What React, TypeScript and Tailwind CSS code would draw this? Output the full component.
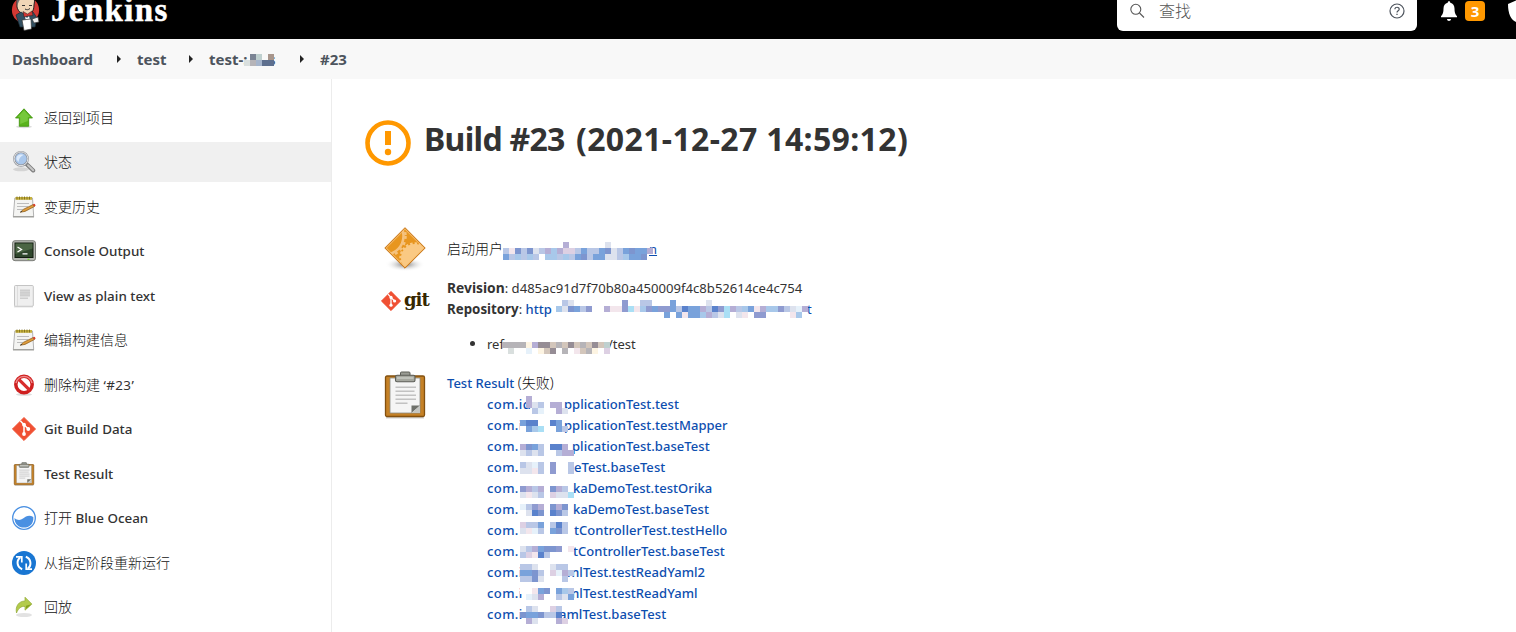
import type { ReactNode } from 'react'

const palette: Record<string, string> = {
  a: '#7d95cf',
  b: '#b9c7e6',
  c: '#dde2ee',
  d: '#5a82cc',
  e: '#a8c8ea',
  f: '#f3e6ec',
  g: '#b5aed5',
  h: '#8f9bd0',
  i: '#79a2db',
  j: '#ddd0e3',
  k: '#aadff5',
  m: '#e6f1fa',
  w: '#ffffff',
  1: '#7b8494',
  2: '#bfd0cf',
  3: '#a8968c',
  4: '#d9dfde',
  5: '#a5b4cb',
  6: '#5e6f8e',
  7: '#b6b4b8',
  8: '#968d95',
  9: '#d3c6bb',
  0: '#fdf4e2',
}

// 6px blocks that hide part of a name, one character per block
const Mosaic = ({ rows, className }: { rows: string[]; className: string }) => {
  const cols = Math.max(...rows.map((r) => r.length))
  return (
    <svg
      className={`absolute ${className}`}
      width={cols * 6}
      height={rows.length * 6}
      shapeRendering="crispEdges"
      aria-hidden="true"
    >
      {rows.map((row, y) =>
        row.split('').map((c, x) =>
          palette[c] ? (
            <rect key={`${x}-${y}`} x={x * 6} y={y * 6} width="6" height="6" fill={palette[c]} />
          ) : null
        )
      )}
    </svg>
  )
}

const JenkinsLogo = () => (
  <svg className="w-[30px] h-[42px]" viewBox="0 0 30 42">
    <circle cx="14.5" cy="21" r="13.6" fill="#d33833" />
    <path d="M6 18C5 8 9 2 15 2s10 5 8 14c0 6-3 10-7 10S7 23 6 18z" fill="#f0d6b7" stroke="#222" strokeWidth="1" />
    <path d="M6 17c-1-8 1-14 8-15-4 3-4 8-6 10z" fill="#6d6b6d" />
    <path d="M11 16.500h3M18 16.500h3M14 20c2 1 3 1 5-.5" stroke="#333" strokeWidth="1" fill="none" />
    <path d="M5 26l5-3 6 4 6-4 4 6-2 9H9z" fill="#335061" stroke="#1b2d38" strokeWidth=".7" />
    <path d="M14 27l2 2 2-2 1 4-4 2z" fill="#fff" />
    <path d="M12 22.500l4.500 2.500 4.500-3 1 4.500-5 .5-4 1z" fill="#d33833" stroke="#222" strokeWidth=".5" />
    <path d="M11 31l9-1 .5 10-7.500 1.500z" fill="#fff" stroke="#333" strokeWidth=".7" />
    <path d="M21 30l6-2 1 5-5 1z" fill="#eee" stroke="#333" strokeWidth=".7" />
  </svg>
)

const ArrowUpIcon = () => (
  <svg className="w-6 h-6" viewBox="0 0 24 24">
    <ellipse cx="12" cy="20.800" rx="8" ry="1.500" fill="#ddd" />
    <path d="M12 2.800L20.500 12H16.700v8.300H7.300V12H3.500z" fill="#59b31c" stroke="#3c9307" strokeWidth=".8" />
    <path d="M12 4.200L18.300 11.200H15.800V15L8.200 18V11.200H5.700z" fill="#8bd650" opacity=".6" />
  </svg>
)

const SearchLensIcon = () => (
  <svg className="w-6 h-6" viewBox="0 0 24 24">
    <ellipse cx="9" cy="19.300" rx="8" ry="2" fill="#d4d4d4" />
    <path d="M14.500 14L21.200 20.500" stroke="#7d7d7d" strokeWidth="4" strokeLinecap="round" />
    <path d="M16 15.200L21.200 20.200" stroke="#c6c6c6" strokeWidth="2" strokeLinecap="round" />
    <circle cx="9" cy="8.800" r="6.800" fill="#a9c7ec" stroke="#8e9299" strokeWidth="2.200" />
    <circle cx="9" cy="8.800" r="6.900" fill="none" stroke="#e3e4e6" strokeWidth="1" />
    <path d="M4.500 9.500C4 5 8 3.800 11.500 5 9 6 7 8 6.500 12z" fill="#dceafb" />
  </svg>
)

const NotepadIcon = () => (
  <svg className="w-6 h-6" viewBox="0 0 24 24">
    <path d="M2.800 3h17.700l1.200 18.500H1.300z" fill="#f4f4f2" stroke="#aaa" strokeWidth=".9" />
    <path d="M1 21.800h21" stroke="#a0a09c" strokeWidth="1.400" />
    <path d="M3.500 2h16.500v2.800H3.500z" fill="#c7b23e" />
    <path d="M5 1.500v3M7.500 1.500v3M10 1.500v3M12.500 1.500v3M15 1.500v3M17.500 1.500v3" stroke="#74651b" strokeWidth=".8" />
    <path d="M5 8.500h12M5 11.500h11M5 14.500h6" stroke="#bcbcbc" strokeWidth="1" />
    <path d="M8.500 17.200l3-2.900 9.700-4.800 1.300 2-9.500 4.900z" fill="#df9d3d" stroke="#855819" strokeWidth=".7" />
    <path d="M20.800 9.500l1.800-.7 1.100 1.600-1.600 1z" fill="#d83a2b" />
    <path d="M8 17.500l2.200-.8-1-1z" fill="#333" />
  </svg>
)

const TerminalIcon = () => (
  <svg className="w-6 h-6" viewBox="0 0 24 24">
    <rect x=".5" y="1.700" width="23" height="20" rx="2.500" fill="#b5b7b1" stroke="#73756f" strokeWidth=".9" />
    <rect x="3" y="4" width="18" height="14.500" fill="#2f472c" stroke="#121c10" strokeWidth="1" />
    <path d="M3.500 4.500h17v5L3.500 15z" fill="#5b7752" opacity=".65" />
    <path d="M5.500 8l4 2.500-4 2.500M10.500 14.800h5" stroke="#fff" strokeWidth="1.300" fill="none" />
    <path d="M15.500 20.300h2" stroke="#6ed629" strokeWidth="1.200" />
  </svg>
)

const DocumentIcon = () => (
  <svg className="w-6 h-6" viewBox="0 0 24 24">
    <rect x="2.500" y="1.500" width="18.800" height="20.800" rx="1" fill="#efefef" stroke="#bdbdbd" strokeWidth=".9" />
    <path d="M5.500 2v20" stroke="#d8d8d8" strokeWidth=".8" />
    <path d="M8 5.500h10v7H8zM8 13.500h8v1.500H8z" fill="#cecece" />
    <path d="M8 7.500h10M8 10h10" stroke="#dedede" strokeWidth=".6" />
    <path d="M2 22.800h19" stroke="#cfcfcf" />
  </svg>
)

const ForbidIcon = () => (
  <svg className="w-6 h-6" viewBox="0 0 24 24">
    <ellipse cx="12" cy="21.500" rx="8" ry="1.300" fill="#ddd" />
    <circle cx="12" cy="11.500" r="8.200" fill="none" stroke="#cf2020" strokeWidth="3.500" />
    <path d="M6.300 5.800l11.400 11.400" stroke="#d82d2d" strokeWidth="3.200" />
    <path d="M4 10a8.200 8.200 0 0 1 16 0" fill="none" stroke="#ed8989" strokeWidth="1.500" />
  </svg>
)

const GitIcon = ({ className = 'w-6 h-6' }: { className?: string }) => (
  <svg className={className} viewBox="0 0 24 24">
    <path d="M12 .4L23.600 12 12 23.600.4 12z" fill="#f05033" stroke="#f05033" strokeWidth=".8" strokeLinejoin="round" />
    <path d="M8.300 3.800L12 7.700v9.300M12.300 8l4 4" stroke="#fff" strokeWidth="1.500" fill="none" />
    <circle cx="12" cy="7.700" r="1.900" fill="#fff" />
    <circle cx="12" cy="17" r="1.900" fill="#fff" />
    <circle cx="16.300" cy="12" r="1.900" fill="#fff" />
  </svg>
)

const ClipboardIcon = ({ className = 'w-6 h-6' }: { className?: string }) => (
  <svg className={className} viewBox="0 0 48 48">
    <path d="M5 46.500h38" stroke="#d0d0d0" strokeWidth="2" />
    <rect x="4.500" y="5" width="39" height="40.500" rx="1.500" fill="#c58126" stroke="#83500f" strokeWidth="1.300" />
    <path d="M9 7h30v35H9z" fill="#f5f5f5" stroke="#8a8a83" strokeWidth=".8" />
    <path d="M30.500 42V34.500H39z" fill="#6f716b" />
    <path d="M30.500 42l8.500-7.500V42z" fill="#c5c6c2" />
    <path d="M14.500 16.200h20.500M14.500 20.200h19M14.500 24.200h20.500M14.500 28.200h20.500M14.500 32.200h12" stroke="#c2c2c2" strokeWidth="1.500" />
    <rect x="19.500" y="1" width="9.500" height="5" rx="1" fill="#9a9c94" stroke="#5c5e57" strokeWidth="1" />
    <rect x="14.500" y="4.300" width="19.500" height="6.500" rx="1.500" fill="#a5a79f" stroke="#5c5e57" strokeWidth="1.100" />
    <path d="M16 7h16.500" stroke="#c9cbc4" strokeWidth="1.500" />
  </svg>
)

const OceanIcon = () => (
  <svg className="w-6 h-6" viewBox="0 0 24 24">
    <circle cx="12" cy="12" r="11.300" fill="#fff" stroke="#4a90e2" strokeWidth="1.300" />
    <path d="M2.500 12c3 2.700 6 2.300 8.500.6 3-2.300 6-4 10.300-1.600.7 7-4 10.600-9.300 10.600S2.500 18 2.500 12z" fill="#4a90e2" />
  </svg>
)

const RestartIcon = () => (
  <svg className="w-6 h-6" viewBox="0 0 24 24">
    <circle cx="12" cy="12" r="12" fill="#1976d2" />
    <path d="M10.200 18.200A6.700 6.700 0 0 1 8.200 6.500M13.800 5.800a6.700 6.700 0 0 1 2 11.700" stroke="#fff" strokeWidth="2" fill="none" />
    <path d="M4 5.800h5.800v5.700M20 18.200h-5.800v-5.700" stroke="#fff" strokeWidth="1.700" fill="none" />
  </svg>
)

const ReplayIcon = () => (
  <svg className="w-6 h-6" viewBox="0 0 24 24">
    <ellipse cx="12" cy="20" rx="8" ry="2" fill="#e2e2e2" />
    <path d="M4.500 18C3 11 7 6 13 6V2.200l6.900 6.900-6.900 6.100V11.500C9 11 6.500 13 4.500 18z" fill="#b3cb4c" stroke="#91a936" strokeWidth=".7" />
    <path d="M14 10.700l5.300-1.500L14 14z" fill="#86a11c" />
  </svg>
)

const BuildGearIcon = () => (
  <svg className="w-12 h-12" viewBox="0 0 48 48">
    <defs>
      <radialGradient id="gearShadow">
        <stop offset="0" stopColor="#777" />
        <stop offset="1" stopColor="#fff" stopOpacity="0" />
      </radialGradient>
      <clipPath id="gearClip">
        <path d="M24 4.500L43 24 24 43 5 24z" />
      </clipPath>
    </defs>
    <ellipse cx="24" cy="40.500" rx="20" ry="7" fill="url(#gearShadow)" />
    <path d="M24 3.700L44.200 24 24 44.200 3.800 24z" fill="#e8961f" stroke="#c8761a" strokeWidth="1" />
    <g clipPath="url(#gearClip)">
      <circle cx="34" cy="34" r="14" fill="#fac983" />
      <circle cx="34" cy="34" r="14.500" fill="none" stroke="#fac983" strokeWidth="2.500" strokeDasharray="2.500 2" />
      <circle cx="4" cy="12" r="18.500" fill="none" stroke="#f5c27e" strokeWidth="2.500" />
      <circle cx="4" cy="12" r="20.500" fill="none" stroke="#f5c27e" strokeWidth="2.500" strokeDasharray="3 3.200" />
    </g>
    <path d="M24 5.200L42.700 24 24 42.700 5.300 24z" fill="none" stroke="#f6c27c" strokeWidth=".9" />
  </svg>
)

const Chevron = () => (
  <svg className="w-1 h-2 shrink-0" viewBox="0 0 4 8">
    <path d="M0 0l4 4-4 4z" fill="#222" />
  </svg>
)

const cjk = 'text-[14px] font-light tracking-normal text-[#111]'

const tasks: { icon: ReactNode; label: ReactNode; active?: boolean }[] = [
  { icon: <ArrowUpIcon />, label: <span className={cjk}>返回到项目</span> },
  { icon: <SearchLensIcon />, label: <span className={cjk}>状态</span>, active: true },
  { icon: <NotepadIcon />, label: <span className={cjk}>变更历史</span> },
  { icon: <TerminalIcon />, label: 'Console Output' },
  { icon: <DocumentIcon />, label: 'View as plain text' },
  { icon: <NotepadIcon />, label: <span className={cjk}>编辑构建信息</span> },
  { icon: <ForbidIcon />, label: <><span className={cjk}>删除构建</span> <span className="font-normal tracking-[0.400px]">‘#23’</span></> },
  { icon: <GitIcon />, label: 'Git Build Data' },
  { icon: <ClipboardIcon />, label: 'Test Result' },
  { icon: <OceanIcon />, label: <><span className={cjk}>打开</span> Blue Ocean</> },
  { icon: <RestartIcon />, label: <span className={cjk}>从指定阶段重新运行</span> },
  { icon: <ReplayIcon />, label: <span className={cjk}>回放</span> },
]

const failedTests = [
  { head: 'com.id', pad: 'w-[77px]', tail: 'pplicationTest.test' },
  { head: 'com.i', pad: 'w-[77px]', tail: 'pplicationTest.testMapper' },
  { head: 'com.', pad: 'w-[85px]', tail: 'plicationTest.baseTest' },
  { head: 'com.', pad: 'w-[87px]', tail: 'eTest.baseTest' },
  { head: 'com.', pad: 'w-[86px]', tail: 'kaDemoTest.testOrika' },
  { head: 'com.', pad: 'w-[86px]', tail: 'kaDemoTest.baseTest' },
  { head: 'com.', pad: 'w-[87px]', tail: 'tControllerTest.testHello' },
  { head: 'com.', pad: 'w-[86px]', tail: 'tControllerTest.baseTest' },
  { head: 'com.i', pad: 'w-[80px]', tail: 'mlTest.testReadYaml2' },
  { head: 'com.i', pad: 'w-[80px]', tail: 'mlTest.testReadYaml' },
  { head: 'com.i', pad: 'w-[72px]', tail: 'amlTest.baseTest' },
]

const testMosaic = [
  '.g.......',
  '.gcb.gg..',
  '..bm..gc.',
  '.........',
  'iddw.di..',
  'wiek..ib.',
  '.........',
  '.........',
  'gaib.ddg.',
  'cbcb..bgg',
  '.........',
  'bcmb.hw.b',
  'ccfb.hw.b',
  '.........',
  '.........',
  'hgbg.agb.',
  'cfcb.jcck',
  '.........',
  'mbhg.aga.',
  'wcda.dab.',
  '.........',
  'jbbi.bdb.',
  'cfmb.iab.',
  '.........',
  '.........',
  'cbgiaah.f',
  'bjfdb.w..',
  '.........',
  'bbc..cbb.',
  'iiab.jmgb',
  'bbac...b.',
  '.........',
  'wwfiawieb',
  '.mcg..bci',
  '.........',
  '.bcw.jb..',
  'aiiabbd..',
  '.gc...gj.',
]

const Header = () => (
  <header className="h-[39px] shrink-0 bg-black flex items-start overflow-hidden">
    <a href="#" className="flex -mt-[11px] ml-[11px]">
      <JenkinsLogo />
      <span className="ml-[10px] mt-px font-['Liberation_Serif',serif] font-bold text-[33px] leading-[40px] tracking-[1.350px] text-white [-webkit-text-stroke:0.500px_white]">
        Jenkins
      </span>
    </a>
    <div className="ml-auto w-[300px] h-[40px] -mt-[9px] rounded-md bg-white flex items-center">
      <svg className="w-4 h-4 ml-3" viewBox="0 0 16 16" fill="none" stroke="#555" strokeWidth="1.100">
        <circle cx="6.800" cy="6.300" r="5" />
        <path d="M10.500 10l4.500 4.500" />
      </svg>
      <span className="ml-[14px] text-[16px] font-light text-[#555] leading-6">查找</span>
      <svg className="w-4 h-4 ml-auto mr-[12px]" viewBox="0 0 16 16" fill="none" stroke="#4d545d">
        <circle cx="8" cy="8" r="7" strokeWidth="1.200" />
        <path d="M5.900 6.300C5.900 3.500 10.200 3.600 10.200 6.200 10.200 7.800 8 7.700 8 9.500" strokeWidth="1.200" />
        <path d="M8 10.700v1.300" strokeWidth="1.300" />
      </svg>
    </div>
    <svg className="w-4 h-5 ml-[24px] mt-px" viewBox="0 0 16 20" fill="#fff">
      <path d="M8 .2c.9 0 1.300.6 1.300 1.500C12 2.500 13.500 4.500 13.500 7.500c0 4 .6 5.500 2.500 7.700v1H0v-1C1.900 13 2.500 11.500 2.500 7.500c0-3 1.500-5 4.200-5.800C6.700.8 7.100.2 8 .2zM6 18h4c0 1.200-.9 2-2 2s-2-.8-2-2z" />
    </svg>
    <span className="ml-2 mt-px w-5 h-5 rounded-[4px] bg-[#ff9800] text-white text-[15px] font-bold leading-5 text-center">3</span>
    <svg className="w-2 h-[22px] ml-[23px]" viewBox="0 0 8 22" fill="#fff">
      <path d="M0 4L8 .5V22C3 20 0 14 0 4z" />
    </svg>
  </header>
)

const Breadcrumbs = () => (
  <nav className="h-10 shrink-0 bg-[#f8f8f8] flex items-center pl-3 text-[15px] font-bold text-[#4d545d]">
    <span className="w-[105px]">Dashboard</span>
    <Chevron />
    <span className="ml-4 w-[52px]">test</span>
    <Chevron />
    <span className="relative ml-4 w-[91px]">
      test-:
      <span className="absolute left-[59px]">s</span>
      <Mosaic className="left-[35px] top-[6px]" rows={['.12.3', '47566']} />
    </span>
    <Chevron />
    <span className="ml-4">#23</span>
  </nav>
)

const SidePanel = () => (
  <aside className="w-[332px] shrink-0 border-r border-[#ececec] pt-[18.500px] flex flex-col gap-[4.500px]">
    {tasks.map((task, i) => (
      <a
        key={i}
        href="#"
        className={`h-10 shrink-0 flex items-center gap-2 pl-3 text-[13.400px] font-medium text-[#333] ${
          task.active ? 'bg-[#f0f0f0]' : ''
        }`}
      >
        {task.icon}
        <span className="whitespace-pre leading-5 h-5">{task.label}</span>
      </a>
    ))}
  </aside>
)

const App = () => {
  return (
    <div className="w-[1516px] h-[632px] overflow-hidden bg-white flex flex-col font-['Noto_Sans','Noto_Sans_CJK_SC',sans-serif] text-[#333]">
      <Header />
      <Breadcrumbs />
      <div className="flex flex-1 min-h-0">
        <SidePanel />
        <main className="flex-1 pl-[33px] pt-[36px] text-[14px] leading-[21px]">
          <h1 className="flex items-center h-[53px] text-[32px] font-bold whitespace-nowrap">
            <svg className="w-[46px] h-[46px] mt-[2px]" viewBox="0 0 46 46">
              <circle cx="23" cy="23" r="20.500" fill="none" stroke="#ff9800" strokeWidth="4.600" />
              <path d="M20 11h6v14h-6z" fill="#ff9800" />
              <circle cx="23" cy="32" r="3.200" fill="#ff9800" />
            </svg>
            <span className="ml-[13px] -mt-[7px] w-[152px] tracking-[-0.700px]">Build #23</span>
            <span className="-mt-[7px] tracking-[0.350px]">(2021-12-27 14:59:12)</span>
          </h1>

          <section className="flex mt-[56px] h-[48px] pl-4">
            <BuildGearIcon />
            <p className="relative ml-[18px] mt-[14px] font-light text-[#111]">
              启动用户
              <span className="absolute left-[202px] top-px text-[13px] font-normal text-[#0d4eaf] underline">n</span>
              <Mosaic
                className="left-[56px] top-[4px]"
                rows={['..........g......c.......', 'bfabacbgegjjbibbiacbiaiig', 'ibebeb.eebebiabiiccbeiia.']}
              />
            </p>
          </section>

          <section className="flex mt-[4px] pl-4">
            <div className="flex items-center h-12 w-12">
              <GitIcon className="w-5 h-5 shrink-0 mt-px" />
              <span className="ml-[3px] mb-[2px] font-['DejaVu_Serif',serif] font-bold text-[18px] tracking-[-1px] text-[#362701]">git</span>
            </div>
            <div className="ml-[18px]">
              <p className="mt-[1px] h-[22px] whitespace-nowrap">
                <b className="text-[13.800px]">Revision</b>
                <span className="text-[13.100px]">: d485ac91d7f70b80a450009f4c8b52614ce4c754</span>
              </p>
              <p className="relative h-[21px] text-[13.300px]">
                <b>Repository</b>
                <span className="text-[13px]">: <a href="#" className="text-[#0d4eaf] font-medium">http</a></span>
                <span className="absolute left-[360px] text-[13px] text-[#0d4eaf]">t</span>
                <Mosaic
                  className="left-[103px] top-[1px]"
                  rows={[
                    '..bc........h..bb...i.....c',
                    '.ecaibh..gffhkfehihhibdiigbdhkgbeifgeehbcmg',
                    '...................i.ifiiegbck.cf.hh....fe',
                  ]}
                />
              </p>
              <ul className="relative mt-[14px] h-[21px] pl-10 list-none text-[13px]">
                <li>
                  <span className="absolute left-[23px] top-[7px] w-[5px] h-[5px] rounded-full bg-[#333]" />
                  ref
                  <span className="absolute left-[161px]">/test</span>
                  <Mosaic className="left-[55px] top-[8px]" rows={['77770g889798979892', '.4..m.098.7.f970.j']} />
                </li>
              </ul>
            </div>
          </section>

          <section className="flex mt-[17px] pl-4">
            <ClipboardIcon className="w-12 h-12 -mt-px" />
            <div className="ml-[18px]">
              <p className="h-[22px]">
                <a href="#" className="text-[13px] text-[#0d4eaf] font-medium">Test Result</a>
                <span className="font-light text-[#111]"> (失败)</span>
              </p>
              <div className="relative pl-10 text-[13px] tracking-[0.050px] text-[#0d4eaf] font-medium">
                {failedTests.map((t) => (
                  <a key={t.head + t.tail} href="#" className="flex whitespace-nowrap">
                    <span className={`${t.pad} shrink-0 tracking-[0.400px]`}>{t.head}</span>
                    <span>{t.tail}</span>
                  </a>
                ))}
                <Mosaic className="left-[73px] top-[2px]" rows={testMosaic} />
              </div>
            </div>
          </section>
        </main>
      </div>
    </div>
  )
}

export default App
